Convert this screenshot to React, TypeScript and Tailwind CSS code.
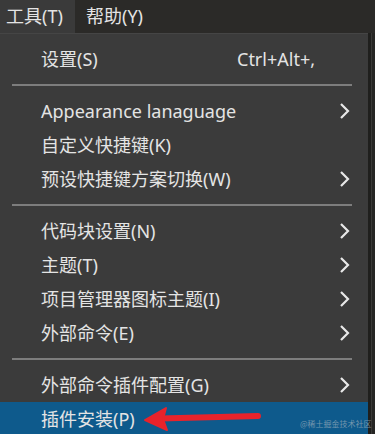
import React from 'react';

type Item =
  | { kind: 'item'; label: string; shortcut?: string; sub?: boolean; active?: boolean }
  | { kind: 'sep' };

const items: Item[] = [
  { kind: 'item', label: '设置(S)', shortcut: 'Ctrl+Alt+,' },
  { kind: 'sep' },
  { kind: 'item', label: 'Appearance lanaguage', sub: true },
  { kind: 'item', label: '自定义快捷键(K)' },
  { kind: 'item', label: '预设快捷键方案切换(W)', sub: true },
  { kind: 'sep' },
  { kind: 'item', label: '代码块设置(N)', sub: true },
  { kind: 'item', label: '主题(T)', sub: true },
  { kind: 'item', label: '项目管理器图标主题(I)', sub: true },
  { kind: 'item', label: '外部命令(E)', sub: true },
  { kind: 'sep' },
  { kind: 'item', label: '外部命令插件配置(G)', sub: true },
  { kind: 'item', label: '插件安装(P)', active: true },
];

const Chevron = () => (
  <svg width="12" height="18" viewBox="0 0 12 18" className="block">
    <polyline points="2,2 9,9 2,16" fill="none" stroke="#e8e8e8" strokeWidth="2.2" />
  </svg>
);

const App: React.FC = () => {
  return (
    <div
      className="w-[375px] h-[434px] overflow-hidden bg-[#262624] text-[18px] text-[#e4e4e4]"
      style={{ fontFamily: '"Noto Sans", "Noto Sans CJK SC", sans-serif' }}
    >
      {/* menu bar */}
      <div className="flex h-[33px] bg-[#2b2a28]">
        <div className="flex items-center h-full w-[75px] pl-[6px] bg-[#3a3a3a]">工具(T)</div>
        <div className="flex items-center h-full pl-[11px]">帮助(Y)</div>
      </div>

      <div className="relative flex">
        {/* dropdown */}
        <div className="w-[368px] bg-[#3b3b3b] pt-[8px] border-t border-[#454545]">
          {items.map((it, i) =>
            it.kind === 'sep' ? (
              <div key={i} className="h-[18px] flex items-center pl-[12px] pr-[16px]">
                <div className="h-[2px] w-full bg-[#7d7d7d]" />
              </div>
            ) : (
              <div
                key={i}
                className={`flex items-center h-[34px] pl-[41px] ${it.active ? 'bg-[#0e5a8c]' : ''}`}
              >
                <span className="flex-1 leading-none whitespace-nowrap">{it.label}</span>
                <div className="w-[131px] flex items-center justify-between pr-[17px]">
                  <span className="leading-none">{it.shortcut ?? ''}</span>
                  {it.sub && <Chevron />}
                </div>
              </div>
            )
          )}
        </div>
        <div className="flex-1 flex">
          <div className="w-[3px] bg-[#1f1f1d]" />
          <div className="w-[1px] bg-[#3a3a38]" />
        </div>

        {/* red annotation arrow */}
        <svg
          className="absolute left-[140px] top-[366px]"
          width="125"
          height="34"
          viewBox="0 0 125 34"
        >
          <path d="M20 19.5 L118 17" stroke="#e8232b" strokeWidth="6" strokeLinecap="round" />
          <path d="M5 21 L26 9 L23 20 L27 31 Z" fill="#e8232b" stroke="#e8232b" strokeWidth="2" strokeLinejoin="round" />
        </svg>

        {/* watermark */}
        <div
          className="absolute left-[300px] top-[387px] text-[8px] leading-none text-[#8ea6b8] opacity-80 whitespace-nowrap"
          style={{ fontFamily: '"Noto Sans CJK SC", sans-serif' }}
        >
          @稀土掘金技术社区
        </div>
      </div>
    </div>
  );
};

export default App;
